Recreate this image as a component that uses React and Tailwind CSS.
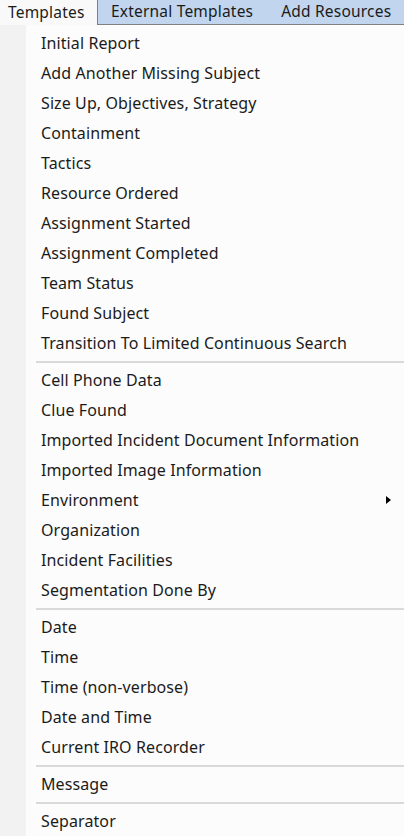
import React from "react";

const groups = [
  [
    "Initial Report",
    "Add Another Missing Subject",
    "Size Up, Objectives, Strategy",
    "Containment",
    "Tactics",
    "Resource Ordered",
    "Assignment Started",
    "Assignment Completed",
    "Team Status",
    "Found Subject",
    "Transition To Limited Continuous Search",
  ],
  [
    "Cell Phone Data",
    "Clue Found",
    "Imported Incident Document Information",
    "Imported Image Information",
    "Environment",
    "Organization",
    "Incident Facilities",
    "Segmentation Done By",
  ],
  ["Date", "Time", "Time (non-verbose)", "Date and Time", "Current IRO Recorder"],
  ["Message"],
  ["Separator"],
];

const MenuItem = ({ label, submenu }) => (
  <div className="flex items-center h-[30px] pl-[41px] pr-3 text-[16px] tracking-[0.1px] text-[#1b1b1b]">
    <span className="flex-1">{label}</span>
    {submenu && (
      <svg width="5" height="8" viewBox="0 0 5 8" className="mr-[1px]">
        <path d="M0 0 L5 4 L0 8 Z" fill="#000" />
      </svg>
    )}
  </div>
);

export default function App() {
  return (
    <div
      className="w-[404px] h-[836px] overflow-hidden bg-[#fcfcfc] flex flex-col"
      style={{ fontFamily: '"Noto Sans", "Open Sans", sans-serif' }}
    >
      {/* Tab strip */}
      <div className="flex h-[25px] text-[15.5px] tracking-[0.2px] text-[#1b1b1b] shrink-0">
        <div className="w-[97px] flex items-center pl-[8px] bg-[#f9f9f9]">Templates</div>
        <div className="flex-1 flex items-center bg-[#c1d5ee] border-l border-b border-[#808080]">
          <span className="ml-[13px]">External Templates</span>
          <span className="ml-[28px]">Add Resources</span>
        </div>
      </div>

      {/* Menu */}
      <div className="relative flex-1 pt-[3px]">
        <div className="absolute left-0 top-0 bottom-0 w-[26px] bg-[#f2f2f2]" />
        <div className="relative">
          {groups.map((group, gi) => (
            <div key={gi}>
              {gi > 0 && (
                <div className="h-[7px] flex items-center pl-[36px]">
                  <div className="w-full h-[2px] bg-[#d9d9d9]" />
                </div>
              )}
              {group.map((label) => (
                <MenuItem key={label} label={label} submenu={label === "Environment"} />
              ))}
            </div>
          ))}
        </div>
      </div>
    </div>
  );
}
